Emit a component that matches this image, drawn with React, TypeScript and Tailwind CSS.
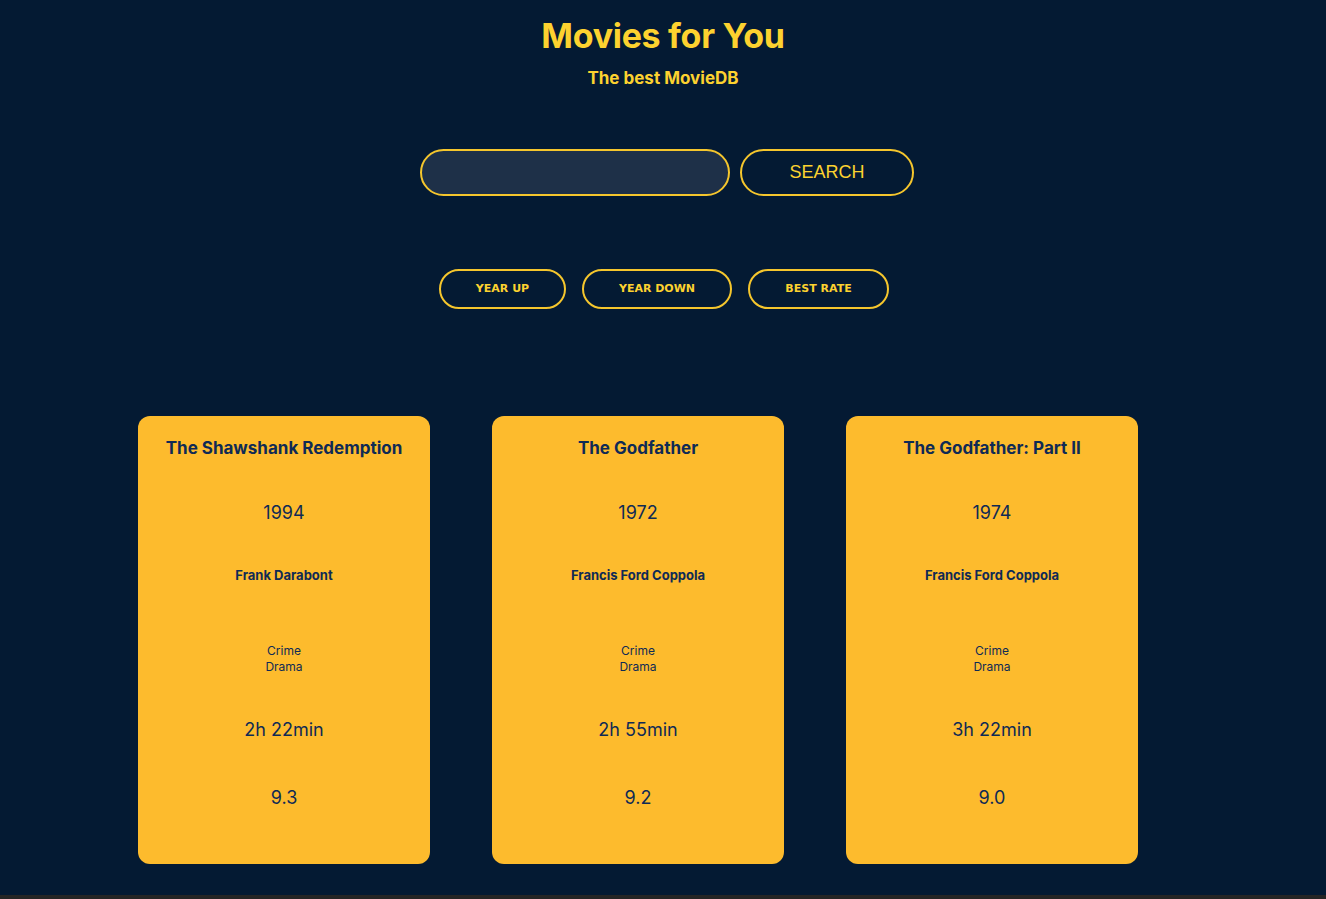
import React from 'react'

interface Movie {
    title: string
    year: number
    director: string
    genres: string[]
    runtime: string
    rate: string
}

const movies: Movie[] = [
    { title: 'The Shawshank Redemption', year: 1994, director: 'Frank Darabont', genres: ['Crime', 'Drama'], runtime: '2h 22min', rate: '9.3' },
    { title: 'The Godfather', year: 1972, director: 'Francis Ford Coppola', genres: ['Crime', 'Drama'], runtime: '2h 55min', rate: '9.2' },
    { title: 'The Godfather: Part II', year: 1974, director: 'Francis Ford Coppola', genres: ['Crime', 'Drama'], runtime: '3h 22min', rate: '9.0' },
]

function MovieCard({ movie }: { movie: Movie }) {
    return (
        <div className="w-[292px] h-[448px] bg-[#fdbb2d] rounded-xl flex flex-col items-center text-center text-[#0f2a55] font-['Inter',sans-serif]">
            <h3 className="mt-[21px] h-[22px] leading-[22px] text-[17px] font-bold">{movie.title}</h3>
            <p className="mt-[43px] h-[22px] leading-[22px] text-[18px]">{movie.year}</p>
            <p className="mt-[42px] h-[18px] leading-[18px] text-[13px] font-bold">{movie.director}</p>
            <div className="mt-[59px] text-[12px] leading-[16px]">
                {movie.genres.map((g) => (
                    <p key={g}>{g}</p>
                ))}
            </div>
            <p className="mt-[44px] h-[22px] leading-[22px] text-[18px]">{movie.runtime}</p>
            <p className="mt-[46px] h-[22px] leading-[22px] text-[18px]">{movie.rate}</p>
        </div>
    )
}

export default function App() {
    return (
        <div className="bg-[#252525] min-h-[899px]">
            <div className="bg-[#041a33] h-[895px] flex flex-col items-center">
                <h1 className="mt-[16px] h-[40px] leading-[40px] text-[34px] font-bold text-[#fdd22f] font-['Inter',sans-serif] tracking-[-0.3px]">
                    Movies for You
                </h1>
                <h2 className="mt-[10px] h-[24px] leading-[24px] text-[17px] font-bold text-[#fdd22f] font-['Inter',sans-serif]">
                    The best MovieDB
                </h2>

                <div className="mt-[59px] pl-[8px] flex gap-[10px]">
                    <input
                        type="text"
                        className="w-[310px] h-[47px] bg-[#1e3048] border-2 border-[#f5c62d] rounded-full px-4 outline-none text-white"
                    />
                    <button className="w-[174px] h-[47px] border-2 border-[#f5c62d] rounded-full text-[#fdd22f] text-[18px] font-['Liberation_Sans',Arial,sans-serif]">
                        SEARCH
                    </button>
                </div>

                <div className="mt-[73px] pl-[2px] flex gap-[16px]">
                    <button className="w-[127px] h-[40px] border-2 border-[#f5c62d] rounded-full text-[#fdd22f] text-[11px] font-bold font-['DejaVu_Sans',Verdana,sans-serif]">
                        YEAR UP
                    </button>
                    <button className="w-[150px] h-[40px] border-2 border-[#f5c62d] rounded-full text-[#fdd22f] text-[11px] font-bold font-['DejaVu_Sans',Verdana,sans-serif]">
                        YEAR DOWN
                    </button>
                    <button className="w-[141px] h-[40px] border-2 border-[#f5c62d] rounded-full text-[#fdd22f] text-[11px] font-bold font-['DejaVu_Sans',Verdana,sans-serif]">
                        BEST RATE
                    </button>
                </div>

                <div className="mt-[107px] self-stretch pl-[138px] flex gap-[62px]">
                    {movies.map((m) => (
                        <MovieCard key={m.title} movie={m} />
                    ))}
                </div>
            </div>
        </div>
    )
}
